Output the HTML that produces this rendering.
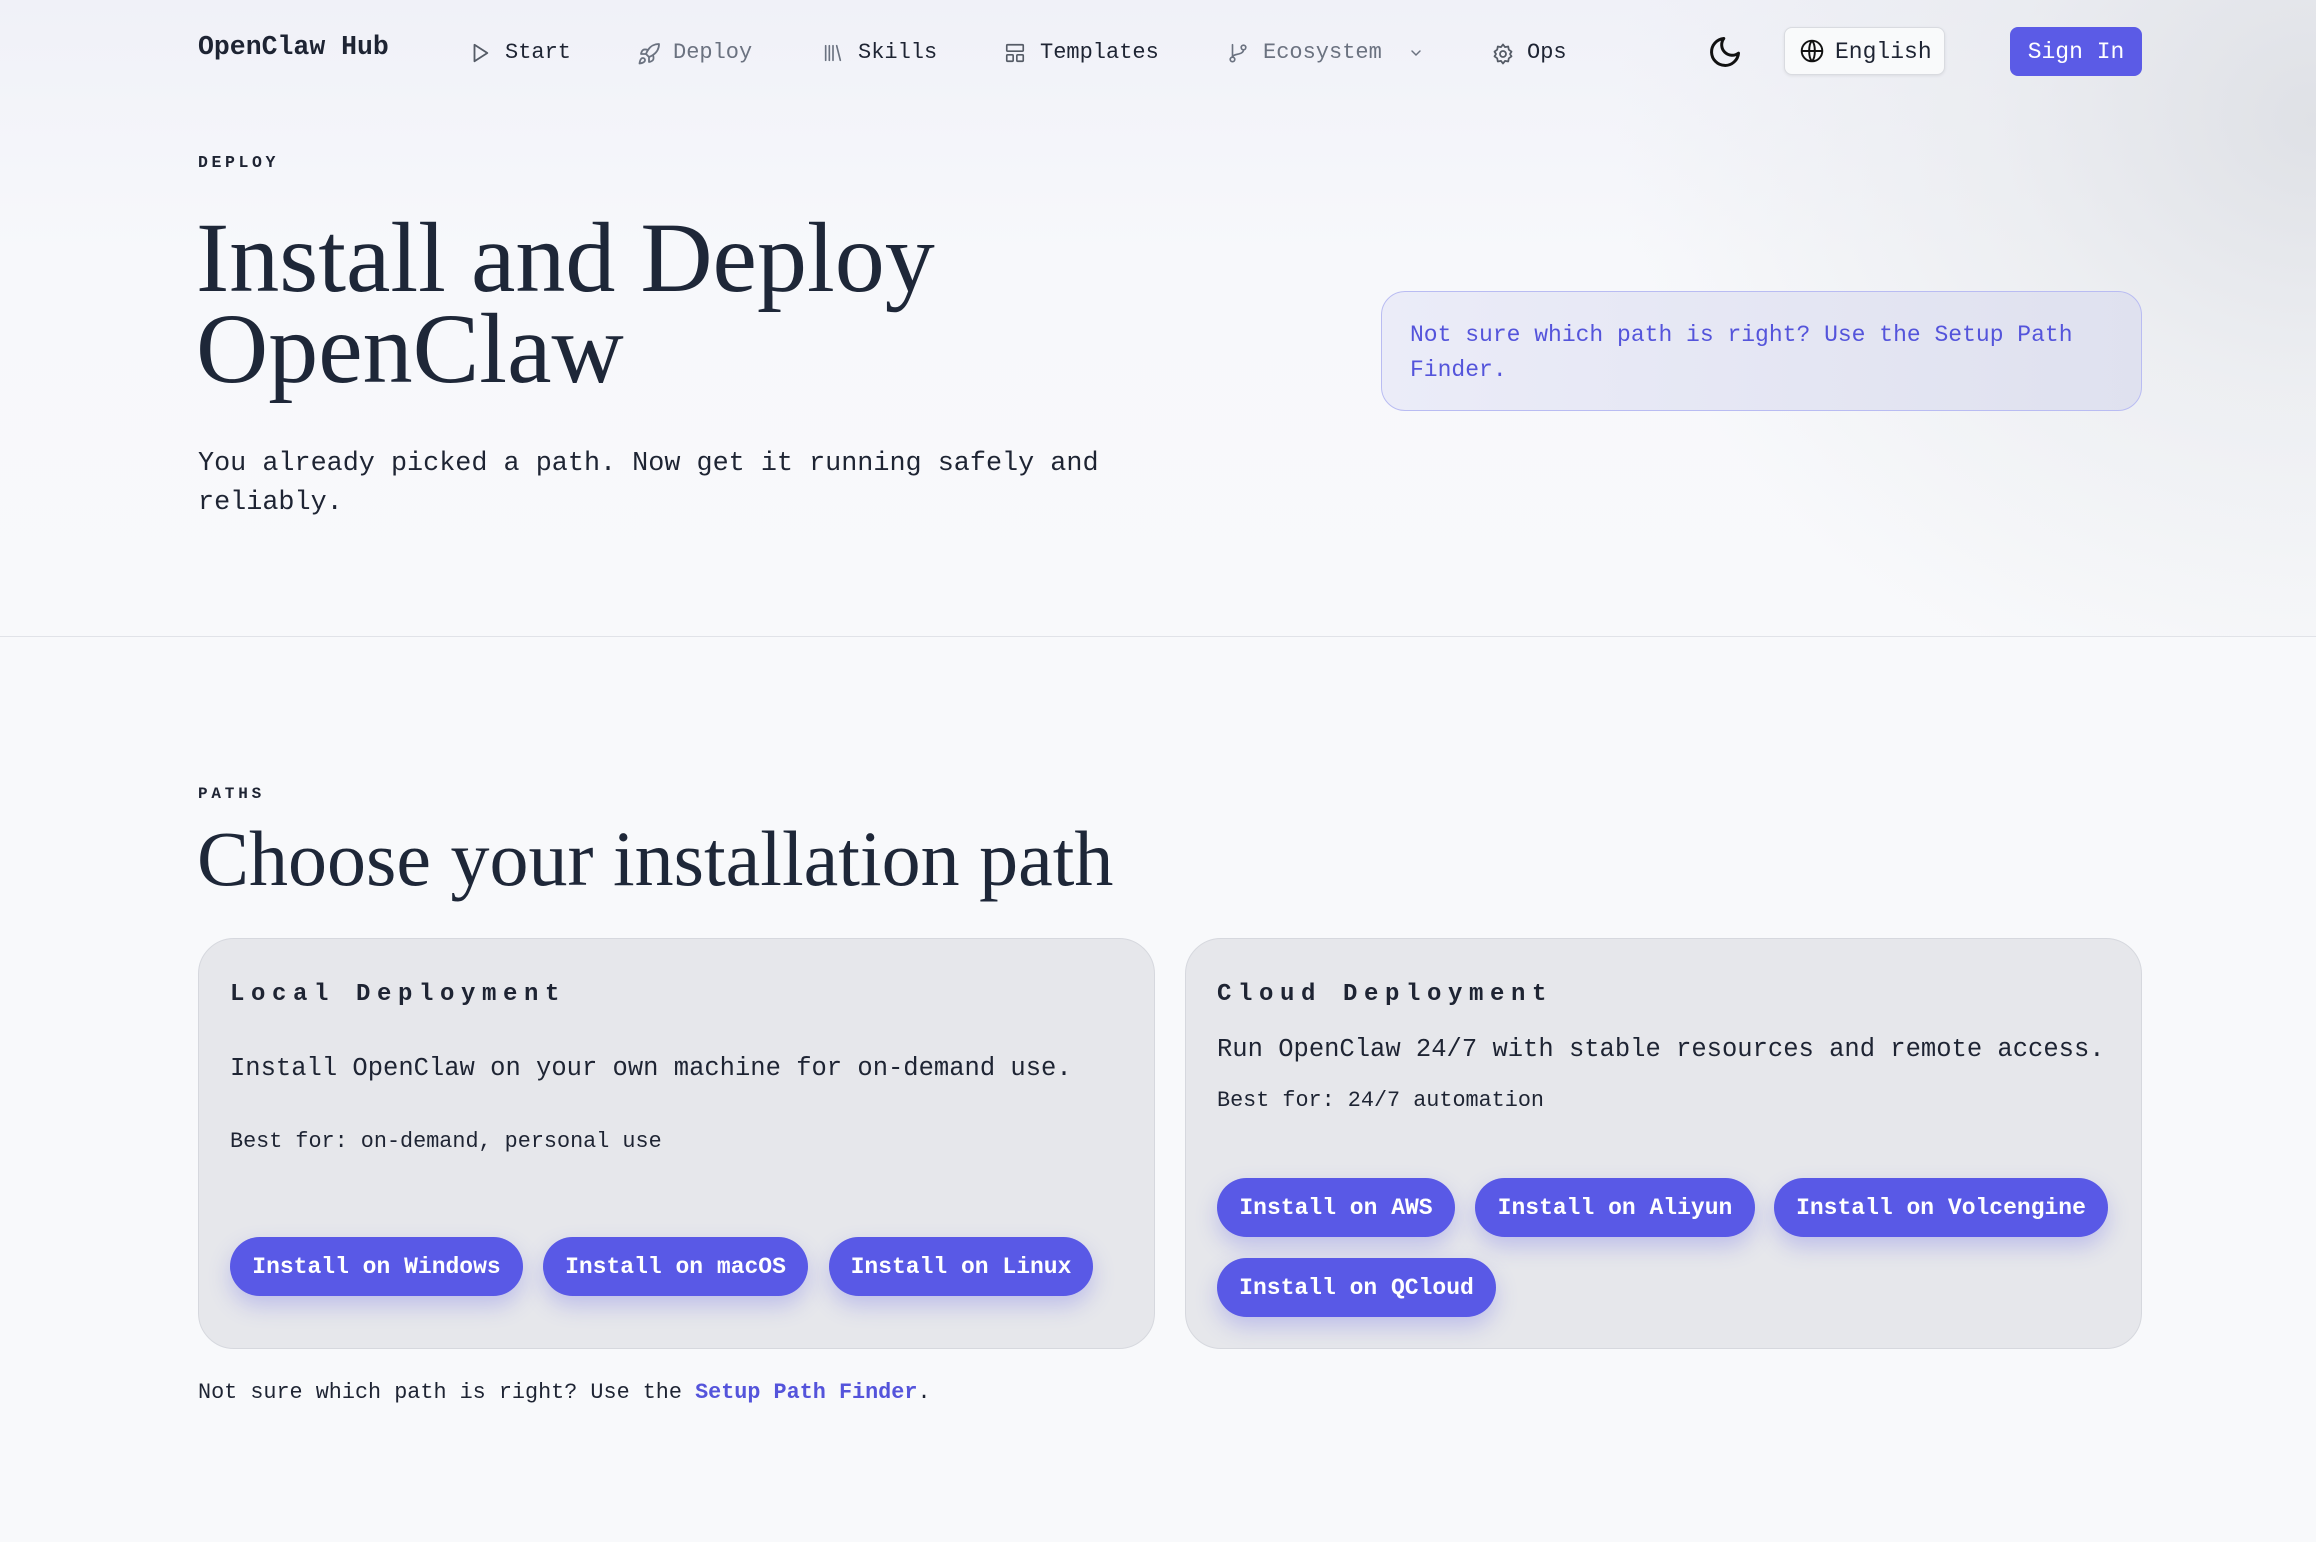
<!DOCTYPE html>
<html><head><meta charset="utf-8"><style>
*{margin:0;padding:0;box-sizing:border-box}
body{width:2316px;height:1542px;position:relative;overflow:hidden;background:#f8f9fb;font-family:"Liberation Mono",monospace;color:#1e2433}
.hero{position:absolute;left:0;top:0;width:2316px;height:637px;background:radial-gradient(ellipse 700px 600px at 2316px 120px,#dfe1e6 0%,rgba(230,232,236,0.6) 45%,rgba(248,249,251,0) 100%),linear-gradient(180deg,#f0f1f8 0%,#f7f8fb 40%,#f8f9fb 100%);border-bottom:1px solid #e1e3e8}
.a{position:absolute;white-space:nowrap}
.nav{font-size:22px;line-height:30px;top:38px}
.nav svg{position:absolute;left:-36px;top:4px}
.btn{position:absolute;background:#5959e6;color:#fff;border-radius:30px;font-weight:bold;font-size:23px;display:flex;align-items:center;justify-content:center;height:59px;box-shadow:0 10px 22px rgba(89,89,230,0.28)}
.card{position:absolute;top:938px;height:411px;width:957px;background:#e6e7eb;border:1.5px solid #d6d8de;border-radius:36px}
.ct{font-weight:bold;font-size:24px;letter-spacing:6.6px;line-height:30px}
</style></head><body>
<div class="hero"></div>

<div class="a" style="left:198px;top:30px;font-size:26.5px;font-weight:bold;line-height:34px">OpenClaw Hub</div>

<div class="a nav" style="left:505px"><svg width="22" height="22" viewBox="0 0 24 24" fill="none" stroke="#555b66" stroke-width="2" stroke-linejoin="round"><path d="M6 3l14 9-14 9z"/></svg>Start</div>
<div class="a nav" style="left:673px;color:#6b7280"><svg width="24" height="24" viewBox="0 0 24 24" fill="none" stroke="#6b7280" stroke-width="1.8" stroke-linecap="round" stroke-linejoin="round"><path d="M4.5 16.5c-1.5 1.3-2 5-2 5s3.7-.5 5-2c.7-.8.7-2.1-.1-2.9a2.2 2.2 0 0 0-2.9-.1z"/><path d="M12 15l-3-3a22 22 0 0 1 2-4A12.9 12.9 0 0 1 22 2c0 2.7-.8 7.5-6 11a22.4 22.4 0 0 1-4 2z"/><path d="M9 12H4s.6-3 2-4c1.6-1.1 5 0 5 0M12 15v5s3-.6 4-2c1.1-1.6 0-5 0-5"/></svg>Deploy</div>
<div class="a nav" style="left:858px"><svg width="22" height="22" viewBox="0 0 24 24" fill="none" stroke="#6b7280" stroke-width="1.8" stroke-linecap="round"><path d="M4 4v16M8 4v16M12 4v16M16 4l4 16"/></svg>Skills</div>
<div class="a nav" style="left:1040px"><svg width="22" height="22" viewBox="0 0 24 24" fill="none" stroke="#555b66" stroke-width="1.8"><rect x="3" y="3" width="18" height="7" rx="1"/><rect x="3" y="14" width="7" height="7" rx="1"/><rect x="14" y="14" width="7" height="7" rx="1"/></svg>Templates</div>
<div class="a nav" style="left:1263px;color:#6b7280"><svg width="22" height="22" viewBox="0 0 24 24" fill="none" stroke="#6b7280" stroke-width="1.8" stroke-linecap="round"><circle cx="6" cy="19" r="2.5"/><circle cx="18" cy="6" r="2.5"/><path d="M6 3v13.5M18 8.5c0 6-12 4-12 8"/></svg>Ecosystem</div>
<svg class="a" style="left:1408px;top:45px" width="16" height="16" viewBox="0 0 24 24" fill="none" stroke="#6b7280" stroke-width="2.2" stroke-linecap="round"><path d="M6 9l6 6 6-6"/></svg>
<div class="a nav" style="left:1527px"><svg width="24" height="24" viewBox="0 0 24 24" fill="none" stroke="#555b66" stroke-width="1.8"><circle cx="12" cy="12" r="3"/><path d="M12 2.5l2 2.6 3.2-.6.6 3.2 2.7 1.9-1.5 2.4 1.5 2.4-2.7 1.9-.6 3.2-3.2-.6-2 2.6-2-2.6-3.2.6-.6-3.2-2.7-1.9 1.5-2.4-1.5-2.4 2.7-1.9.6-3.2 3.2.6z" stroke-linejoin="round"/></svg>Ops</div>

<svg class="a" style="left:1707px;top:34px" width="36" height="36" viewBox="0 0 24 24" fill="none" stroke="#111" stroke-width="2" stroke-linejoin="round"><path d="M21 12.8A9 9 0 1 1 11.2 3a7 7 0 0 0 9.8 9.8z"/></svg>
<div class="a" style="left:1784px;top:27px;width:161px;height:48px;background:#f9fafb;border:1.5px solid #d9dbe0;border-radius:8px;box-shadow:0 1px 3px rgba(0,0,0,.08)"></div>
<svg class="a" style="left:1799px;top:38px" width="26" height="26" viewBox="0 0 24 24" fill="none" stroke="#111" stroke-width="1.8"><circle cx="12" cy="12" r="9.5"/><path d="M2.5 12h19M12 2.5c-3.5 3.5-3.5 15.5 0 19M12 2.5c3.5 3.5 3.5 15.5 0 19"/></svg>
<div class="a" style="left:1835px;top:36px;font-size:23px;line-height:32px">English</div>
<div class="a" style="left:2010px;top:27px;width:132px;height:49px;background:#5b5be6;border-radius:8px;color:#fff;font-size:23px;display:flex;align-items:center;justify-content:center">Sign In</div>

<div class="a" style="left:198px;top:151px;font-size:16.5px;letter-spacing:3.6px;font-weight:bold;line-height:24px">DEPLOY</div>
<div class="a" style="left:196px;top:212px;font-family:'Liberation Serif',serif;font-size:100px;line-height:91px;color:#1e2738;letter-spacing:0px">Install and Deploy<br>OpenClaw</div>
<div class="a" style="left:198px;top:445px;font-size:26.8px;line-height:39px">You already picked a path. Now get it running safely and<br>reliably.</div>

<div class="a" style="left:1381px;top:291px;width:761px;height:120px;border-radius:24px;border:1.5px solid #b9bcf2;background:linear-gradient(90deg,#ebecf8,#dfe1ef)"></div>
<div class="a" style="left:1410px;top:318px;font-size:23px;line-height:35px;color:#5454db">Not sure which path is right? Use the Setup Path<br>Finder.</div>

<div class="a" style="left:198px;top:782px;font-size:16px;letter-spacing:3.8px;font-weight:bold;line-height:24px">PATHS</div>
<div class="a" style="left:197px;top:817px;font-family:'Liberation Serif',serif;font-size:78px;line-height:84px;color:#1e2738;letter-spacing:0px">Choose your installation path</div>

<div class="card" style="left:198px"></div>
<div class="card" style="left:1185px"></div>

<div class="a ct" style="left:230px;top:980px">Local Deployment</div>
<div class="a" style="left:230px;top:1053px;font-size:25.5px;line-height:32px">Install OpenClaw on your own machine for on-demand use.</div>
<div class="a" style="left:230px;top:1128px;font-size:21.8px;line-height:28px">Best for: on-demand, personal use</div>
<div class="btn" style="left:230px;top:1237px;width:293px">Install on Windows</div>
<div class="btn" style="left:543px;top:1237px;width:265px">Install on macOS</div>
<div class="btn" style="left:829px;top:1237px;width:264px">Install on Linux</div>

<div class="a ct" style="left:1217px;top:980px">Cloud Deployment</div>
<div class="a" style="left:1217px;top:1034px;font-size:25.5px;line-height:32px">Run OpenClaw 24/7 with stable resources and remote access.</div>
<div class="a" style="left:1217px;top:1087px;font-size:21.8px;line-height:28px">Best for: 24/7 automation</div>
<div class="btn" style="left:1217px;top:1178px;width:238px">Install on AWS</div>
<div class="btn" style="left:1475px;top:1178px;width:280px">Install on Aliyun</div>
<div class="btn" style="left:1774px;top:1178px;width:334px">Install on Volcengine</div>
<div class="btn" style="left:1217px;top:1258px;width:279px">Install on QCloud</div>

<div class="a" style="left:198px;top:1379px;font-size:21.8px;line-height:28px">Not sure which path is right? Use the <b style="color:#5454db">Setup Path Finder</b>.</div>
</body></html>
